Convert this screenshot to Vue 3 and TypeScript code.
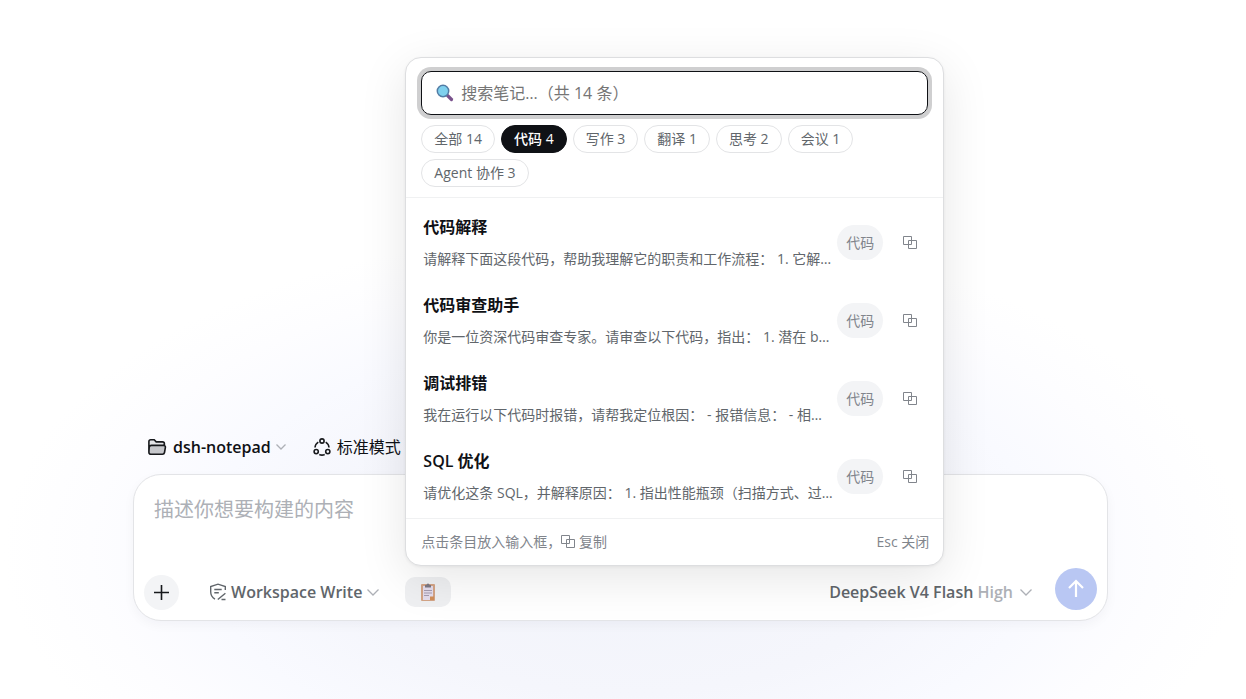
<script setup lang="ts">
import { ref } from 'vue'

interface Category { name: string; count: number }
interface Note { title: string; preview: string; tag: string }

const categories: Category[] = [
  { name: '全部', count: 14 },
  { name: '代码', count: 4 },
  { name: '写作', count: 3 },
  { name: '翻译', count: 1 },
  { name: '思考', count: 2 },
  { name: '会议', count: 1 },
  { name: 'Agent 协作', count: 3 },
]
const active = ref('代码')
const query = ref('')
const draft = ref('')

const notes: Note[] = [
  { title: '代码解释', preview: '请解释下面这段代码，帮助我理解它的职责和工作流程： 1. 它解…', tag: '代码' },
  { title: '代码审查助手', preview: '你是一位资深代码审查专家。请审查以下代码，指出： 1. 潜在 b…', tag: '代码' },
  { title: '调试排错', preview: '我在运行以下代码时报错，请帮我定位根因： - 报错信息： - 相…', tag: '代码' },
  { title: 'SQL 优化', preview: '请优化这条 SQL，并解释原因： 1. 指出性能瓶颈（扫描方式、过…', tag: '代码' },
]
</script>

<template>
  <main class="page">
    <div class="context">
      <button type="button" class="plain">
        <svg class="folder" width="20" height="18" viewBox="0 0 20 18">
          <path d="M2 8V3.500C2 2.400 2.700 1.700 3.800 1.700h3.400l2 2.200h6.300c1.100 0 1.900.8 1.900 1.900V8z" fill="#e4e5e8" stroke="none" />
          <path d="M2.200 7.400h16.200l-1 7.200c-.1 1-.8 1.700-1.800 1.700H4c-1.100 0-1.900-.7-1.900-1.800z" fill="#c6c7cb" stroke="none" />
          <path d="M1.900 14V3.500c0-1.100.8-1.800 1.900-1.800h3.400l2 2.200h6.300c1.100 0 1.900.8 1.900 1.900V7.400M2.200 9.200c.3-1.200 1-1.800 2.200-1.800h12.200c1.300 0 2 .8 1.800 2l-.9 5.100c-.2 1.200-.9 1.800-2 1.800H4c-1.200 0-2.100-.8-2.100-2z" />
        </svg>
        <span class="strong">dsh-notepad</span>
        <svg class="chev" width="12" height="8" viewBox="0 0 12 8"><path d="M1.500 1.500 6 6l4.500-4.500" /></svg>
      </button>
      <button type="button" class="plain">
        <svg class="mode" width="18" height="18" viewBox="0 0 18 18">
          <circle cx="9" cy="3" r="2.100" /><circle cx="3.200" cy="13.600" r="2.100" /><circle cx="14.800" cy="13.600" r="2.100" />
          <path d="M5.300 4.100A7 7 0 0 0 2 9.500M12.700 4.100A7 7 0 0 1 16 9.500M6.300 16.600a7 7 0 0 0 5.400 0" />
        </svg>
        <span>标准模式</span>
      </button>
    </div>

    <section class="composer">
      <textarea v-model="draft" rows="2" aria-label="任务描述" placeholder="描述你想要构建的内容"></textarea>
      <div class="toolbar">
        <button type="button" class="add" aria-label="添加">
          <svg width="15" height="15" viewBox="0 0 15 15"><path d="M7.500 0v15M0 7.500h15" /></svg>
        </button>
        <button type="button" class="plain access">
          <svg class="shield" width="18" height="18" viewBox="0 0 18 18">
            <path d="M16.300 7V3.600L9 1.200 1.700 3.600v5.200c0 3.500 1.600 5.900 4.300 7.400M5.300 6.500h7.400M5.300 9.800h4.500M8.800 16.500l7.600-6.300M12.500 16.500h4" />
          </svg>
          <span class="strong">Workspace Write</span>
          <svg class="chev" width="14" height="9" viewBox="0 0 14 9"><path d="M1.500 1.500 7 7l5.500-5.500" /></svg>
        </button>
        <div class="notes">
          <button type="button" class="clip" aria-label="笔记" aria-expanded="true">
            <svg width="14" height="18" viewBox="0 0 14 18">
              <rect x="0" y="1" width="14" height="17" rx="1" fill="#d3a486" />
              <path d="M2 3h10v10.500L9 17H2z" fill="#e4dcec" />
              <path d="M9 17v-3.500h4V17z" fill="#d08e5a" />
              <path d="M4 4.500V2h1.500a1.500 1.500 0 0 1 3 0H10v2.500z" fill="#7c7883" />
              <path d="M3 7.500h8M3 10h8M3 12.500h5" stroke="#a49bb0" />
            </svg>
          </button>
          <div class="popover" role="dialog" aria-label="笔记">
            <header class="head">
              <label class="search">
                <svg width="18" height="18" viewBox="0 0 18 18">
                  <path d="m11.500 11.500 4 4" stroke="#79518c" stroke-width="3.200" stroke-linecap="round" />
                  <circle cx="7" cy="7" r="5.700" fill="#7fd0ee" stroke="#527ca5" stroke-width="1.500" />
                </svg>
                <input v-model="query" type="text" aria-label="搜索笔记" placeholder="搜索笔记…（共 14 条）" />
              </label>
              <div class="chips">
                <button v-for="c in categories" :key="c.name" type="button" class="chip" :class="{ on: c.name === active }" @click="active = c.name">{{ c.name }} {{ c.count }}</button>
              </div>
            </header>
            <ul class="list">
              <li v-for="n in notes" :key="n.title">
                <button type="button" class="note">
                  <span class="title">{{ n.title }}</span>
                  <span class="preview">{{ n.preview }}</span>
                </button>
                <span class="tag">{{ n.tag }}</span>
                <button type="button" class="copy" aria-label="复制">
                  <svg class="dup" width="14" height="14" viewBox="0 0 14 14"><path d="M.5.500h8v8h-8zM5.500 4.500h8v8h-8z" /></svg>
                </button>
              </li>
            </ul>
            <footer class="foot">
              <span class="hint">点击条目放入输入框，<svg class="dup" width="14" height="14" viewBox="0 0 14 14"><path d="M.5.500h8v8h-8zM5.500 4.500h8v8h-8z" /></svg> 复制</span>
              <span>Esc 关闭</span>
            </footer>
          </div>
        </div>
        <button type="button" class="plain model">
          <span class="strong">DeepSeek V4 Flash <span class="level">High</span></span>
          <svg class="chev" width="14" height="9" viewBox="0 0 14 9"><path d="M1.500 1.500 7 7l5.500-5.500" /></svg>
        </button>
        <button type="button" class="send" aria-label="发送">
          <svg width="20" height="20" viewBox="0 0 20 20"><path d="M10 18V2M3 9l7-7 7 7" /></svg>
        </button>
      </div>
    </section>
  </main>
</template>

<style>
body { margin: 0; background: #fff; }
</style>

<style scoped>
* { box-sizing: border-box; }
.page {
  min-height: 100vh;
  display: flex;
  flex-direction: column;
  justify-content: flex-end;
  padding: 0 138px 78px 133px;
  font-family: "Open Sans", "Noto Sans CJK SC", sans-serif;
  font-size: 16px;
  line-height: 24px;
  color: #0f1115;
  background: radial-gradient(ellipse 620px 320px at 50% 550px, #f1f3fa 0%, #f5f6fc 45%, #f9faff 68%, #fdfdff 86%, #fff 100%);
}
button, input, textarea { font: inherit; color: inherit; margin: 0; padding: 0; border: 0; background: none; }
button { cursor: pointer; }
svg { flex: none; fill: none; }
.plain { display: flex; align-items: center; white-space: nowrap; }
.strong { font-weight: 600; }
.chev path { stroke: #adb0b6; stroke-width: 1.300; }
.context { display: flex; gap: 26px; padding: 0 14px; margin-bottom: 15px; }
.context .plain { gap: 6px; }
.context .chev { margin-left: -2px; }
.folder, .mode { stroke: #17191c; stroke-width: 1.600; }
.composer {
  display: flex;
  flex-direction: column;
  padding: 21px 10px 10px;
  border: 1px solid #e3e4e7;
  border-radius: 28px;
  background: #fff;
  box-shadow: 0 4px 12px rgba(20, 30, 60, .04);
}
textarea { resize: none; outline: 0; height: 72px; padding: 0 10px; font-size: 20px; line-height: 28px; }
textarea::placeholder { color: #adb0b6; opacity: 1; }
.toolbar { display: flex; align-items: flex-end; }
.toolbar .plain { height: 36px; }
.add { display: grid; place-items: center; width: 35px; height: 35px; border-radius: 50%; background: #f3f4f6; }
.add svg { stroke: #17191c; stroke-width: 1.600; }
.access { margin-left: 30px; gap: 4px; color: #61666b; }
.shield { stroke: #61666b; stroke-width: 1.400; }
.notes { position: relative; margin: 0 0 3px 25px; }
.clip { display: grid; place-items: center; width: 46px; height: 30px; border-radius: 10px; background: #eff0f2; }
.model { margin-left: auto; gap: 6px; color: #61666b; }
.level { color: #adb0b6; }
.send { display: grid; place-items: center; width: 42px; height: 42px; margin-left: 22px; border-radius: 50%; background: #b9c7f3; }
.send svg { stroke: #fff; stroke-width: 2.200; }

.popover {
  position: absolute;
  left: 0;
  bottom: calc(100% + 11px);
  width: 539px;
  border: 1px solid #dddee0;
  border-radius: 16px;
  background: #fff;
  box-shadow: 0 12px 48px rgba(0, 0, 0, .1), 0 1px 3px rgba(0, 0, 0, .06);
}
.head { padding: 13px 15px 10px; border-bottom: 1px solid #f0f1f2; }
.search {
  display: flex;
  align-items: center;
  gap: 7px;
  height: 44px;
  padding: 0 14px;
  border: 1px solid #0f1115;
  border-radius: 10px;
  box-shadow: 0 0 0 4px #cfcfd0;
}
.search input { flex: 1; min-width: 0; outline: 0; }
.search input::placeholder { color: #757575; opacity: 1; }
.chips { display: flex; flex-wrap: wrap; gap: 6px; margin-top: 10px; }
.chip { height: 28px; padding: 0 12px; border: 1px solid #e3e4e6; border-radius: 15px; font-size: 14px; line-height: 20px; color: #61666b; }
.chip.on { background: #0f1115; border-color: #0f1115; color: #fff; font-weight: 500; }
.list { list-style: none; margin: 0; padding: 6px 5px 2px; }
.list li { display: flex; align-items: center; padding: 10px 14px 11px 12px; }
.note { flex: 1; min-width: 0; display: flex; flex-direction: column; gap: 7px; text-align: left; }
.title { font-weight: 600; line-height: 26px; }
.preview { white-space: nowrap; font-size: 14px; line-height: 24px; color: #61666b; }
.tag { flex: none; margin-left: 10px; padding: 0 9px; border-radius: 18px; background: #f3f4f6; font-size: 14px; line-height: 35px; color: #81858c; }
.copy { display: grid; place-items: center; width: 28px; height: 28px; margin-left: 13px; }
.dup { stroke: #81858c; }
.hint .dup { vertical-align: -2px; }
.foot { display: flex; justify-content: space-between; padding: 11px 14px 11px 15px; border-top: 1px solid #f0f1f2; font-size: 14px; line-height: 24px; color: #81858c; }
.hint { white-space: nowrap; }
</style>
